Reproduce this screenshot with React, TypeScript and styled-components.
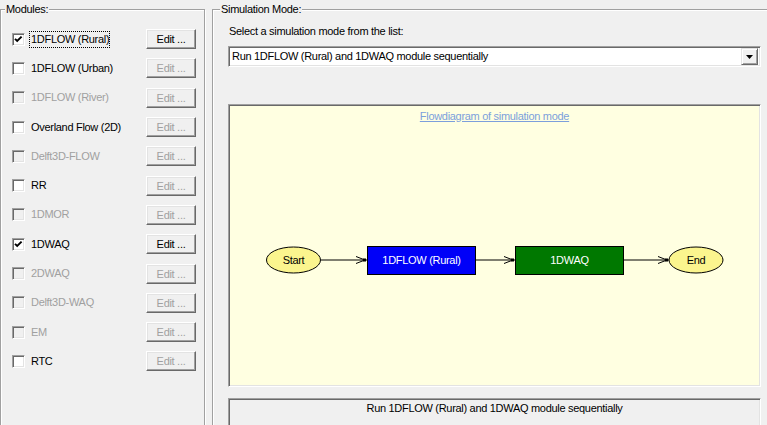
import React from "react";
import styled, { createGlobalStyle } from "styled-components";

const GlobalStyle = createGlobalStyle`
  html, body {
    margin: 0;
    padding: 0;
    height: 425px;
    overflow: hidden;
    background: #f0f0f0;
  }
  body {
    font-family: "Liberation Sans", Arial, sans-serif;
    font-size: 11px;
    letter-spacing: -0.3px;
    color: #000;
  }
`;

const Window = styled.div`
  box-sizing: border-box;
  display: flex;
  align-items: flex-start;
  gap: 7px;
  padding-top: 3px;
  width: 767px;
  height: 425px;
  overflow: hidden;
`;

const GroupBox = styled.fieldset<{ $width: number; $height: number }>`
  box-sizing: border-box;
  width: ${(p) => p.$width}px;
  height: ${(p) => p.$height}px;
  margin: 0;
  padding: 0;
  min-width: 0;
  border: 1px solid #a0a0a0;
  box-shadow: inset 1px 1px 0 #fff, 1px 1px 0 #fff;
  flex-shrink: 0;
`;

const Caption = styled.legend<{ $offset: number }>`
  margin-left: ${(p) => p.$offset}px;
  padding: 0 1px;
  line-height: 13px;
  background: #f0f0f0;
`;

const ModuleList = styled.div`
  display: flex;
  flex-direction: column;
  padding: 8.5px 8px 0 11px;
`;

const ModuleRow = styled.div`
  display: flex;
  align-items: center;
  height: 29.3px;
`;

const CheckBox = styled.span<{ $disabled?: boolean }>`
  box-sizing: border-box;
  display: flex;
  align-items: center;
  justify-content: center;
  width: 13px;
  height: 13px;
  border: 1px solid;
  border-color: #a0a0a0 #fff #fff #a0a0a0;
  box-shadow: inset 1px 1px 0 #696969, inset -1px -1px 0 #e3e3e3;
  background: ${(p) => (p.$disabled ? "#f0f0f0" : "#fff")};
  flex-shrink: 0;
`;

const Label = styled.span<{ $disabled?: boolean; $focused?: boolean }>`
  margin-left: 4px;
  padding: 1px 0 1px 1px;
  line-height: 13px;
  border: 1px ${(p) => (p.$focused ? "dotted #000" : "solid transparent")};
  color: ${(p) => (p.$disabled ? "#a0a0a0" : "#000")};
  white-space: nowrap;
`;

const EditButton = styled.button`
  box-sizing: border-box;
  margin-left: auto;
  width: 50px;
  height: 20px;
  padding: 0;
  border: 1px solid;
  border-color: #fff #696969 #696969 #fff;
  box-shadow: inset -1px -1px 0 #a0a0a0, inset 1px 1px 0 #e3e3e3;
  background: #f0f0f0;
  font-family: inherit;
  font-size: 11px;
  letter-spacing: inherit;
  color: #000;

  &:disabled {
    color: #a0a0a0;
  }
`;

const ModeArea = styled.div`
  display: flex;
  flex-direction: column;
  width: 533px;
  padding: 9px 0 0 15px;
`;

const Prompt = styled.div`
  line-height: 13px;
  padding-left: 1px;
`;

const Sunken = styled.div`
  box-sizing: border-box;
  border: 1px solid;
  border-color: #a0a0a0 #fff #fff #a0a0a0;
  box-shadow: inset 1px 1px 0 #696969, inset -1px -1px 0 #e3e3e3;
`;

const ComboBox = styled(Sunken)`
  display: flex;
  align-items: center;
  height: 21px;
  margin-top: 8px;
  padding: 2px 2px 2px 3px;
  background: #fff;
`;

const ComboText = styled.span`
  flex: 1;
  line-height: 13px;
`;

const DropButton = styled.span`
  box-sizing: border-box;
  display: flex;
  align-items: center;
  justify-content: center;
  width: 17px;
  height: 17px;
  border: 1px solid;
  border-color: #e3e3e3 #696969 #696969 #e3e3e3;
  box-shadow: inset 1px 1px 0 #fff, inset -1px -1px 0 #a0a0a0;
  background: #f0f0f0;
`;

const DiagramPanel = styled(Sunken)`
  display: flex;
  flex-direction: column;
  height: 283px;
  margin-top: 37px;
  padding: 5px 1px 0;
  background: #ffffe1;
`;

const DiagramLink = styled.a`
  align-self: center;
  line-height: 13px;
  color: #7c9fdc;
  text-decoration: underline;
  cursor: pointer;
`;

const StatusPanel = styled(Sunken)`
  height: 30px;
  margin-top: 11px;
  padding-top: 3px;
  text-align: center;
  line-height: 13px;
`;

const modules = [
  { name: "1DFLOW (Rural)", checked: true, enabled: true },
  { name: "1DFLOW (Urban)", checked: false, enabled: true },
  { name: "1DFLOW (River)", checked: false, enabled: false },
  { name: "Overland Flow (2D)", checked: false, enabled: true },
  { name: "Delft3D-FLOW", checked: false, enabled: false },
  { name: "RR", checked: false, enabled: true },
  { name: "1DMOR", checked: false, enabled: false },
  { name: "1DWAQ", checked: true, enabled: true },
  { name: "2DWAQ", checked: false, enabled: false },
  { name: "Delft3D-WAQ", checked: false, enabled: false },
  { name: "EM", checked: false, enabled: false },
  { name: "RTC", checked: false, enabled: true },
];

const CheckMark = () => (
  <svg width="9" height="9" viewBox="0 0 9 9">
    <polyline points="1,3.8 3.2,6 7.6,1.6" fill="none" stroke="#000" strokeWidth="1.9" />
  </svg>
);

const Arrow: React.FC<{ x: number; y: number }> = ({ x, y }) => (
  <g>
    <polyline points={`${x - 11},${y - 3.5} ${x - 2},${y} ${x - 11},${y + 3.5}`} fill="none" stroke="#000" />
    <rect x={x - 4} y={y - 1.5} width="3" height="3" fill="#000" />
  </g>
);

const FlowDiagram = () => {
  const cy = 137;
  return (
    <svg width="531" height="262" style={{ display: "block" }}>
      <g fontFamily='"Liberation Sans", Arial, sans-serif' fontSize="11" textAnchor="middle">
        <line x1="91" y1={cy} x2="137" y2={cy} stroke="#000" />
        <line x1="245" y1={cy} x2="285" y2={cy} stroke="#000" />
        <line x1="393" y1={cy} x2="439" y2={cy} stroke="#000" />
        <Arrow x={137} y={cy} />
        <Arrow x={285} y={cy} />
        <Arrow x={439} y={cy} />

        <ellipse cx="63.5" cy={cy} rx="27" ry="13" fill="#fbf58e" stroke="#000" />
        <text x="63.5" y={cy + 4}>Start</text>

        <rect x="137.5" y="123.5" width="108" height="28" fill="#0000f8" stroke="#000" />
        <text x="191.5" y={cy + 4} fill="#fff">1DFLOW (Rural)</text>

        <rect x="285.5" y="123.5" width="108" height="28" fill="#007800" stroke="#000" />
        <text x="339.5" y={cy + 4} fill="#fff">1DWAQ</text>

        <ellipse cx="466" cy={cy} rx="27" ry="13" fill="#fbf58e" stroke="#000" />
        <text x="466" y={cy + 4}>End</text>
      </g>
    </svg>
  );
};

const App = () => (
  <>
    <GlobalStyle />
    <Window>
      <GroupBox $width={205} $height={460}>
        <Caption $offset={4}>Modules:</Caption>
        <ModuleList>
          {modules.map((m, idx) => (
            <ModuleRow key={m.name}>
              <CheckBox $disabled={!m.enabled}>{m.checked && <CheckMark />}</CheckBox>
              <Label $disabled={!m.enabled} $focused={idx === 0}>
                {m.name}
              </Label>
              <EditButton disabled={!m.checked}>Edit ...</EditButton>
            </ModuleRow>
          ))}
        </ModuleList>
      </GroupBox>
      <GroupBox $width={580} $height={460}>
        <Caption $offset={7}>Simulation Mode:</Caption>
        <ModeArea>
          <Prompt>Select a simulation mode from the list:</Prompt>
          <ComboBox>
            <ComboText>Run 1DFLOW (Rural) and 1DWAQ module sequentially</ComboText>
            <DropButton>
              <svg width="7" height="4" viewBox="0 0 7 4">
                <polygon points="0,0 7,0 3.5,4" fill="#000" />
              </svg>
            </DropButton>
          </ComboBox>
          <DiagramPanel>
            <DiagramLink>Flowdiagram of simulation mode</DiagramLink>
            <FlowDiagram />
          </DiagramPanel>
          <StatusPanel>Run 1DFLOW (Rural) and 1DWAQ module sequentially</StatusPanel>
        </ModeArea>
      </GroupBox>
    </Window>
  </>
);

export default App;
